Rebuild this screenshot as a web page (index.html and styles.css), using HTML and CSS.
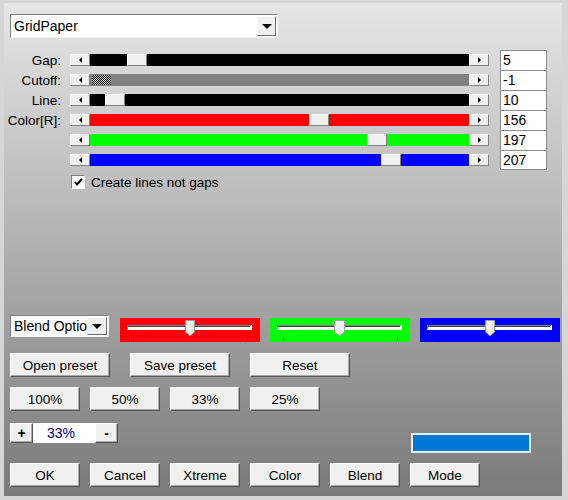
FILE: index.html
```html
<!DOCTYPE html>
<html>
<head>
<meta charset="utf-8">
<link rel="stylesheet" href="styles.css">
</head>
<body>
<div class="frame">
  <div class="panel">
    <div class="combo main">
      <span class="ctext">GridPaper</span>
      <span class="cbtn"><span class="down"></span></span>
    </div>

    <div class="sliders">
      <div class="srow">
        <span class="lbl">Gap:</span>
        <div class="slider"><span class="arr"><span class="tl"></span></span><div class="track black"><span class="thumb" style="left:37px"></span></div><span class="arr"><span class="tr"></span></span></div>
        <span class="val">5</span>
      </div>
      <div class="srow">
        <span class="lbl">Cutoff:</span>
        <div class="slider"><span class="arr"><span class="tl"></span></span><div class="track gray"><span class="thumb hatch" style="left:2px"></span></div><span class="arr"><span class="tr"></span></span></div>
        <span class="val">-1</span>
      </div>
      <div class="srow">
        <span class="lbl">Line:</span>
        <div class="slider"><span class="arr"><span class="tl"></span></span><div class="track black"><span class="thumb" style="left:15px"></span></div><span class="arr"><span class="tr"></span></span></div>
        <span class="val">10</span>
      </div>
      <div class="srow">
        <span class="lbl">Color[R]:</span>
        <div class="slider"><span class="arr"><span class="tl"></span></span><div class="track red"><span class="thumb" style="left:219px"></span></div><span class="arr"><span class="tr"></span></span></div>
        <span class="val">156</span>
      </div>
      <div class="srow">
        <span class="lbl"></span>
        <div class="slider"><span class="arr"><span class="tl"></span></span><div class="track green"><span class="thumb" style="left:277px"></span></div><span class="arr"><span class="tr"></span></span></div>
        <span class="val">197</span>
      </div>
      <div class="srow">
        <span class="lbl"></span>
        <div class="slider"><span class="arr"><span class="tl"></span></span><div class="track blue"><span class="thumb" style="left:291px"></span></div><span class="arr"><span class="tr"></span></span></div>
        <span class="val last">207</span>
      </div>
    </div>

    <div class="checkrow">
      <span class="cbox"><svg width="11" height="11" viewBox="0 0 11 11"><path d="M2 5 L4 7.5 L9 2" fill="none" stroke="#000" stroke-width="2"/></svg></span>
      <span class="clabel">Create lines not gaps</span>
    </div>

    <div class="blendrow">
      <div class="combo small">
        <span class="ctext">Blend Options</span>
        <span class="cbtn"><span class="down"></span></span>
      </div>
      <div class="cslider red">
        <svg width="140" height="24" viewBox="0 0 140 24">
          <rect x="7" y="7" width="125" height="5" fill="#fff"/>
          <rect x="7" y="7" width="124" height="1" fill="#808080"/>
          <rect x="7" y="7" width="1" height="4" fill="#808080"/>
          <rect x="8" y="8" width="122" height="1" fill="#404040"/>
          <path d="M65.5 2.5 H74.5 V14 L70 18 L65.5 14 Z" fill="#f0f0f0" stroke="#a0a0a0"/>
          <rect x="13" y="19" width="1" height="4" fill="#000"/>
          <rect x="127" y="19" width="1" height="4" fill="#000"/>
        </svg>
      </div>
      <div class="cslider green">
        <svg width="140" height="24" viewBox="0 0 140 24">
          <rect x="7" y="7" width="125" height="5" fill="#fff"/>
          <rect x="7" y="7" width="124" height="1" fill="#808080"/>
          <rect x="7" y="7" width="1" height="4" fill="#808080"/>
          <rect x="8" y="8" width="122" height="1" fill="#404040"/>
          <path d="M64.5 2.5 H74.5 V14 L69.5 18 L64.5 14 Z" fill="#f0f0f0" stroke="#a0a0a0"/>
          <rect x="13" y="19" width="1" height="4" fill="#000"/>
          <rect x="127" y="19" width="1" height="4" fill="#000"/>
        </svg>
      </div>
      <div class="cslider blue">
        <svg width="140" height="24" viewBox="0 0 140 24">
          <rect x="7" y="7" width="125" height="5" fill="#fff"/>
          <rect x="7" y="7" width="124" height="1" fill="#808080"/>
          <rect x="7" y="7" width="1" height="4" fill="#808080"/>
          <rect x="8" y="8" width="122" height="1" fill="#404040"/>
          <path d="M65.5 2.5 H74.5 V14 L70 18 L65.5 14 Z" fill="#f0f0f0" stroke="#a0a0a0"/>
          <rect x="13" y="19" width="1" height="4" fill="#000"/>
          <rect x="127" y="19" width="1" height="4" fill="#000"/>
        </svg>
      </div>
    </div>

    <div class="brow wide">
      <button class="btn w100">Open preset</button>
      <button class="btn w100">Save preset</button>
      <button class="btn w100">Reset</button>
    </div>

    <div class="brow">
      <button class="btn">100%</button>
      <button class="btn">50%</button>
      <button class="btn">33%</button>
      <button class="btn">25%</button>
    </div>

    <div class="zoomrow">
      <div class="zoomgrp">
        <button class="btn pm">+</button>
        <span class="zval">33%</span>
        <button class="btn pm">-</button>
      </div>
      <div class="colorbar"></div>
    </div>

    <div class="brow">
      <button class="btn">OK</button>
      <button class="btn">Cancel</button>
      <button class="btn">Xtreme</button>
      <button class="btn">Color</button>
      <button class="btn">Blend</button>
      <button class="btn">Mode</button>
    </div>
  </div>
</div>
</body>
</html>
```

FILE: styles.css
```css
body {
  margin: 0;
  font-family: "Liberation Sans", Arial, sans-serif;
  font-size: 13.5px;
  color: #000;
}

.frame {
  width: 568px;
  height: 500px;
  box-sizing: border-box;
  padding: 3px 6px 4px 4px;
  background: #d6d6d6;
}

.panel {
  height: 100%;
  box-sizing: border-box;
  padding: 11px 0 0 6px;
  background: linear-gradient(#e6e6e6, #7a7a7a);
}

/* combo boxes */
.combo {
  box-sizing: border-box;
  background: #fff;
  border: 1px solid;
  border-color: #808080 #f4f4f4 #f4f4f4 #808080;
  display: flex;
  align-items: center;
  justify-content: space-between;
  overflow: hidden;
}
.combo.main {
  width: 268px;
  height: 24px;
  padding: 0 1px 0 3px;
  font-size: 14px;
}
.combo.small {
  width: 99px;
  height: 22px;
  padding: 0 1px 0 3px;
  font-size: 14px;
  position: relative;
}
.ctext {
  white-space: nowrap;
  overflow: hidden;
}
.cbtn {
  flex: none;
  width: 19px;
  height: 20px;
  box-sizing: border-box;
  background: #f0f0f0;
  border: 1px solid;
  border-color: #fff #6a6a6a #6a6a6a #fff;
  display: flex;
  align-items: center;
  justify-content: center;
}
.combo.small .cbtn {
  height: 18px;
  width: 20px;
  position: absolute;
  right: 1px;
  top: 1px;
}
.down {
  width: 0;
  height: 0;
  border-left: 5px solid transparent;
  border-right: 5px solid transparent;
  border-top: 5px solid #000;
  margin-top: 1px;
}

/* sliders */
.sliders {
  margin-top: 12px;
}
.srow {
  display: flex;
  align-items: center;
  height: 20px;
  margin-left: -6px;
}
.lbl {
  width: 57px;
  text-align: right;
  margin-right: 9px;
}
.slider {
  display: flex;
  width: 419px;
  height: 12px;
}
.arr {
  flex: none;
  width: 20px;
  height: 12px;
  box-sizing: border-box;
  background: #f0f0f0;
  border: 1px solid;
  border-color: #fff #808080 #808080 #fff;
  display: flex;
  align-items: center;
  justify-content: center;
}
.tl {
  width: 0;
  height: 0;
  border-top: 3px solid transparent;
  border-bottom: 3px solid transparent;
  border-right: 3px solid #000;
}
.tr {
  width: 0;
  height: 0;
  border-top: 3px solid transparent;
  border-bottom: 3px solid transparent;
  border-left: 3px solid #000;
}
.track {
  flex: 1;
  position: relative;
  height: 12px;
}
.track.black { background: #000; }
.track.gray { background: #808080; }
.track.red { background: #ff0000; }
.track.green { background: #00ff00; }
.track.blue { background: #0000ff; }
.thumb {
  position: absolute;
  top: 0;
  width: 20px;
  height: 12px;
  box-sizing: border-box;
  background: #f0f0f0;
  border: 1px solid;
  border-color: #fff #808080 #808080 #fff;
}
.thumb.hatch {
  width: 19px;
  top: 1px;
  height: 10px;
  border: none;
  background: repeating-conic-gradient(#000 0 25%, #d0d0d0 0 50%) 0 0 / 2px 2px;
}
.val {
  width: 47px;
  height: 20px;
  box-sizing: border-box;
  margin-left: 11px;
  background: #fff;
  border: 1px solid #8c8c8c;
  border-bottom: none;
  padding-left: 2px;
  font-size: 14px;
  line-height: 19px;
}
.val.last {
  border-bottom: 1px solid #8c8c8c;
}

/* checkbox */
.checkrow {
  display: flex;
  align-items: center;
  margin-top: 5px;
  margin-left: 61px;
  height: 14px;
}
.cbox {
  width: 14px;
  height: 14px;
  box-sizing: border-box;
  background: #fff;
  border: 1px solid;
  border-color: #808080 #fff #fff #808080;
  display: flex;
  align-items: center;
  justify-content: center;
  margin-right: 6px;
}
.cbox svg { display: block; }

/* blend row */
.blendrow {
  display: flex;
  align-items: flex-start;
  margin-top: 126px;
  height: 27px;
}
.cslider {
  width: 140px;
  height: 24px;
  margin-top: 3px;
  margin-left: 10px;
}
.cslider svg { display: block; }
.blendrow .cslider.red { margin-left: 11px; background: #ff0000; }
.cslider.green { background: #00ff00; }
.cslider.blue { background: #0000ff; }

/* buttons */
.brow {
  display: flex;
  gap: 10px;
  margin-top: 10px;
}
.brow.wide {
  gap: 20px;
  margin-top: 11px;
}
.btn {
  width: 70px;
  height: 24px;
  box-sizing: border-box;
  margin: 0;
  padding: 0;
  font-family: "Liberation Sans", Arial, sans-serif;
  font-size: 13.5px;
  color: #000;
  background: #f0f0f0;
  border: 1px solid;
  border-color: #fff #555 #555 #fff;
  box-shadow: inset -1px -1px #a8a8a8;
}
.btn.w100 { width: 100px; }

.zoomrow {
  display: flex;
  align-items: flex-start;
  margin-top: 12px;
  height: 30px;
}
.zoomgrp {
  display: flex;
  height: 20px;
}
.btn.pm {
  width: 23px;
  height: 20px;
  font-weight: bold;
  font-size: 14px;
  line-height: 16px;
}
.zval {
  width: 62px;
  height: 20px;
  background: #fff;
  color: #000080;
  font-size: 14px;
  line-height: 20px;
  text-align: center;
  box-sizing: border-box;
  padding-right: 6px;
}
.colorbar {
  width: 120px;
  height: 20px;
  box-sizing: border-box;
  margin-top: 10px;
  margin-left: 293px;
  background: #0078d7;
  border: 2px solid #eeeeee;
}
```
